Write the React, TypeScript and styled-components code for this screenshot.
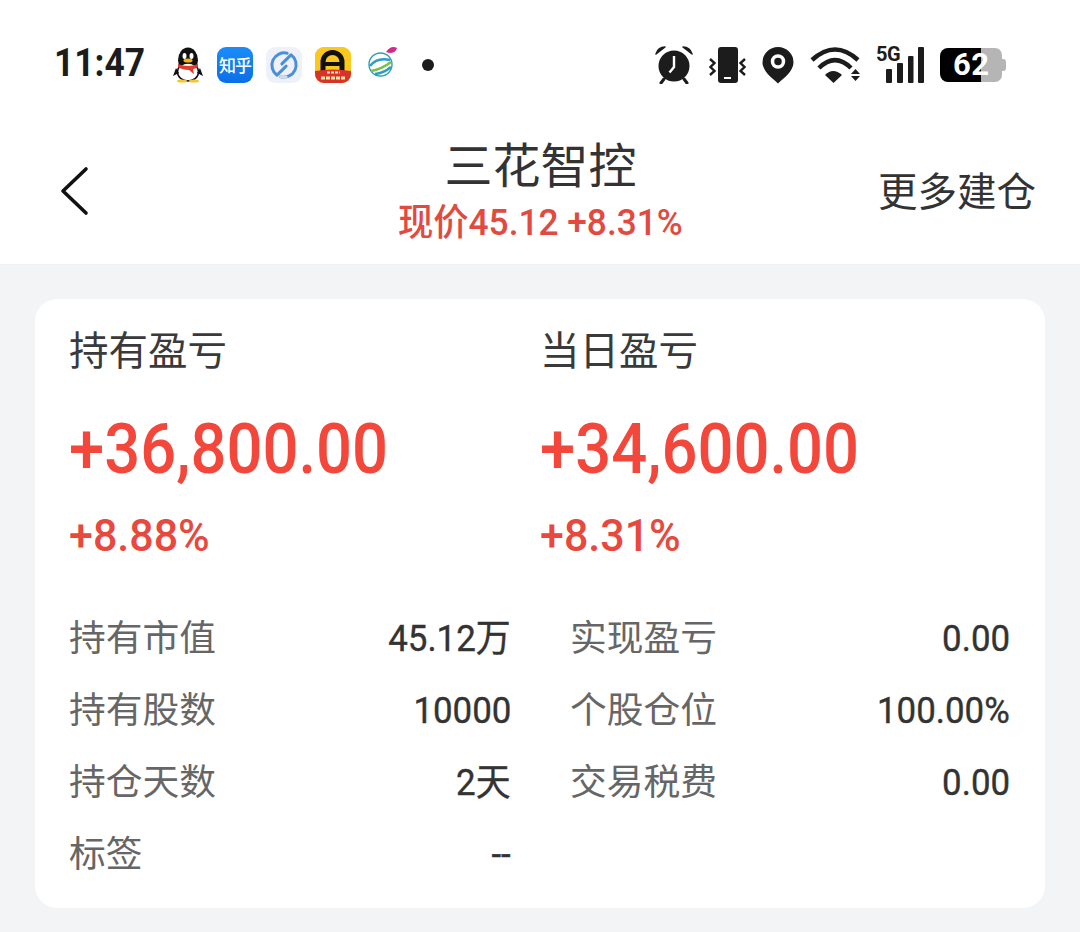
import styled, { createGlobalStyle } from "styled-components";

const GlobalStyle = createGlobalStyle`
  html, body {
    margin: 0;
    padding: 0;
    background: #f3f4f6;
    overflow: hidden;
  }
  * { box-sizing: border-box; }
  body {
    font-family: Roboto, "Noto Sans CJK SC", sans-serif;
  }
`;

const Page = styled.div`
  width: 1080px;
  height: 932px;
  display: flex;
  flex-direction: column;
  background: #f3f4f6;
`;

const Top = styled.header`
  background: #fff;
  height: 265px;
  border-bottom: 1px solid #eff0f2;
  display: flex;
  flex-direction: column;
`;

const StatusBar = styled.div`
  height: 125px;
  padding: 4px 74px 0 54px;
  display: flex;
  align-items: center;
  justify-content: space-between;
`;

const StatusGroup = styled.div<{ $gap: number }>`
  display: flex;
  align-items: center;
  gap: ${(p) => p.$gap}px;
`;

// the phone font is narrower than Roboto, so numbers get squeezed a bit
const Clock = styled.span`
  font-size: 38px;
  font-weight: 700;
  color: #1c1c1c;
  width: 91px;
  margin: -3px 14px 0 0;
  white-space: nowrap;
  transform: scaleX(0.93);
  transform-origin: left center;
`;

const AppIcon = styled.div<{ $bg: string }>`
  width: 36px;
  height: 36px;
  border-radius: 9px;
  background: ${(p) => p.$bg};
  display: flex;
  align-items: center;
  justify-content: center;
  overflow: hidden;
  flex: none;
`;

const ZhihuText = styled.span`
  font-family: "Noto Sans CJK SC", sans-serif;
  font-size: 17px;
  font-weight: 500;
  color: #fff;
  letter-spacing: -1px;
  line-height: 1;
`;

const Dot = styled.span`
  width: 12px;
  height: 12px;
  border-radius: 50%;
  background: #1c1c1c;
  margin-left: 11px;
`;

const SignalWrap = styled.div`
  position: relative;
  width: 48px;
  height: 38px;
`;

const FiveG = styled.span`
  position: absolute;
  left: 0;
  top: -2px;
  font-size: 20px;
  line-height: 20px;
  font-weight: 700;
  color: #1c1c1c;
  white-space: nowrap;
  letter-spacing: -0.5px;
`;

const BatteryWrap = styled.div`
  display: flex;
  align-items: center;
`;

const Battery = styled.div`
  width: 62px;
  height: 34px;
  border-radius: 8px 7px 7px 8px;
  overflow: hidden;
  background: linear-gradient(90deg, #000 0 41px, #b5b5b5 41px);
  display: flex;
  align-items: center;
  padding-left: 13px;
  font-size: 31px;
  font-weight: 700;
  color: #fff;
  letter-spacing: 0.5px;
`;

const BatteryCap = styled.span`
  width: 4px;
  height: 12px;
  background: #b5b5b5;
  border-radius: 0 3px 3px 0;
`;

const NavBar = styled.div`
  flex: 1;
  display: grid;
  grid-template-columns: 1fr 283px 354px;
  align-items: center;
  padding: 0 44px 0 58px;
`;

const Back = styled.div`
  display: flex;
  align-items: center;
  margin-top: -7px;
`;

const TitleBlock = styled.div`
  display: flex;
  flex-direction: column;
  align-items: center;
  margin-top: -14px;
`;

const Title = styled.div`
  font-family: "Noto Sans CJK SC", sans-serif;
  font-size: 48px;
  line-height: 58px;
  color: #333;
`;

const SubTitle = styled.div`
  font-size: 37.5px;
  font-weight: 500;
  line-height: 42px;
  margin-top: 10px;
  color: #e2493f;
  white-space: nowrap;
  transform: scaleX(0.94);
`;

const NavAction = styled.div`
  justify-self: end;
  font-family: "Noto Sans CJK SC", sans-serif;
  font-size: 39.5px;
  color: #333;
  margin-top: -12px;
`;

const Body = styled.main`
  flex: 1;
  padding: 34px 35px 24px;
`;

const Card = styled.section`
  background: #fff;
  border-radius: 22px;
  height: 609px;
  padding: 24px 34px 0;
`;

const Summary = styled.div`
  display: grid;
  grid-template-columns: 471px 1fr;
`;

const SummaryCol = styled.div`
  display: flex;
  flex-direction: column;
`;

const SummaryLabel = styled.div`
  font-family: "Noto Sans CJK SC", sans-serif;
  font-size: 39.5px;
  line-height: 50px;
  color: #3a3a3a;
`;

const BigNumber = styled.div`
  font-size: 70px;
  font-weight: 500;
  line-height: 78px;
  margin-top: 37px;
  color: #f4473b;
  white-space: nowrap;
  transform: scaleX(0.905);
  transform-origin: 1px center;
`;

const Percent = styled.div`
  font-size: 45px;
  font-weight: 500;
  line-height: 48px;
  margin-top: 24px;
  color: #e8483d;
  white-space: nowrap;
  transform: scaleX(0.955);
  transform-origin: 1px center;
`;

const Details = styled.div`
  display: grid;
  grid-template-columns: 442px 440px;
  column-gap: 59px;
  grid-auto-rows: 72px;
  margin-top: 39px;
`;

const DetailRow = styled.div`
  display: flex;
  align-items: baseline;
  justify-content: space-between;
`;

const DetailLabel = styled.span`
  font-family: "Noto Sans CJK SC", sans-serif;
  font-size: 36.75px;
  line-height: 72px;
  color: #666;
`;

const DetailValue = styled.span`
  font-size: 37.5px;
  font-weight: 400;
  color: #333;
  -webkit-text-stroke: 0.4px #333;
  white-space: nowrap;
  transform: scaleX(0.93);
  transform-origin: right center;
`;

const BackIcon = () => (
  <svg width="32" height="52" viewBox="0 0 32 52" fill="none">
    <path d="M28 4 L5 26 L28 48" stroke="#111" strokeWidth="3.6" strokeLinecap="round" strokeLinejoin="round" />
  </svg>
);

const QQIcon = () => (
  <svg width="32" height="36" viewBox="0 0 32 36">
    <ellipse cx="16" cy="13" rx="10" ry="12.5" fill="#111" />
    <ellipse cx="16" cy="25" rx="10.5" ry="9" fill="#fff" stroke="#111" strokeWidth="1.5" />
    <path d="M4 21 L1 29 L7 26 Z M28 21 L31 29 L25 26 Z" fill="#111" />
    <ellipse cx="12.5" cy="9" rx="2" ry="3" fill="#fff" />
    <ellipse cx="19.5" cy="9" rx="2" ry="3" fill="#fff" />
    <ellipse cx="16" cy="13.5" rx="4.5" ry="2" fill="#f7b500" />
    <path d="M6 17 Q16 21 26 17 L26 20 Q22 22 21 22 L22 27 L17 23 Q10 23 6 20 Z" fill="#e23c2b" />
    <ellipse cx="10" cy="34" rx="5" ry="1.5" fill="#f7c531" />
    <ellipse cx="22" cy="34" rx="5" ry="1.5" fill="#f7c531" />
  </svg>
);

const SwirlIcon = () => (
  <svg width="30" height="30" viewBox="0 0 28 28" fill="none" strokeWidth="2.8" strokeLinecap="round" strokeLinejoin="round">
    <path d="M17 3 A11.5 11.5 0 0 0 7.5 23.5 L16 15" stroke="#4a8fdc" />
    <path d="M11 25 A11.5 11.5 0 0 0 20.5 4.5 L12 13" stroke="#4a8fdc" />
    <path d="M11 25 A11.5 11.5 0 0 0 16 25.2" stroke="#d4dbe4" />
  </svg>
);

const BadgeIcon = () => (
  <svg width="36" height="36" viewBox="0 0 36 36">
    <rect width="36" height="36" fill="#fbc81e" />
    <path d="M8 24 V15 A9.5 9.5 0 0 1 27 15 V24" fill="none" stroke="#111" strokeWidth="5" />
    <path d="M8 17 H27" stroke="#111" strokeWidth="4" />
    <path d="M0 24 Q18 21 36 24 V36 H0 Z" fill="#d8322a" />
    <path d="M12 25.5 H25" stroke="#fde7a8" strokeWidth="2" strokeDasharray="3 1" />
    <path d="M6 31 H30" stroke="#fde7a8" strokeWidth="3" strokeDasharray="4 1" />
  </svg>
);

const MobileIcon = () => (
  <svg width="34" height="36" viewBox="0 0 34 36" fill="none">
    <circle cx="16.5" cy="17.5" r="11.5" fill="#fff" stroke="#2f9fb0" strokeWidth="1.4" />
    <path d="M6 19 Q13 10 26 13" stroke="#2e9cc5" strokeWidth="2.5" />
    <path d="M7 24 Q18 22 27 15" stroke="#7ac143" strokeWidth="2.5" />
    <path d="M11 27 Q20 26 27 20" stroke="#2e9cc5" strokeWidth="2.5" />
    <path d="M22 5 Q27 -2 33 1 Q31 8 22 5 Z" fill="#d5288f" />
  </svg>
);

const AlarmIcon = () => (
  <svg width="38" height="38" viewBox="0 0 38 38">
    <circle cx="19" cy="20" r="15.5" fill="#1c1c1c" />
    <path d="M1 8 Q3 1 10 1 Z M37 8 Q35 1 28 1 Z" fill="#1c1c1c" stroke="#1c1c1c" strokeWidth="1.5" strokeLinejoin="round" />
    <path d="M9 33 L6 37 M29 33 L32 37" stroke="#1c1c1c" strokeWidth="3" strokeLinecap="round" />
    <path d="M19 10 V21 L14.5 26.5" stroke="#fff" strokeWidth="2.4" fill="none" />
  </svg>
);

const VibrateIcon = () => (
  <svg width="37" height="38" viewBox="0 0 37 38" fill="none">
    <rect x="9" y="1" width="20" height="36" rx="3" fill="#1c1c1c" />
    <path d="M15 32 H22" stroke="#fff" strokeWidth="2" />
    <path d="M1 13 L5.5 17 L1.5 21 L5.5 25 L1 29" stroke="#1c1c1c" strokeWidth="2.4" />
    <path d="M36 13 L31.5 17 L35.5 21 L31.5 25 L36 29" stroke="#1c1c1c" strokeWidth="2.4" />
  </svg>
);

const PinIcon = () => (
  <svg width="32" height="38" viewBox="0 0 32 38">
    <path d="M16 1 A15.5 15.5 0 0 1 31.5 16.5 C31.5 25 22 32 16 37.5 C10 32 0.5 25 0.5 16.5 A15.5 15.5 0 0 1 16 1 Z" fill="#1c1c1c" />
    <circle cx="16" cy="15.5" r="5.5" fill="none" stroke="#fff" strokeWidth="3.5" />
  </svg>
);

const WifiIcon = () => (
  <svg width="50" height="36" viewBox="0 0 50 36" fill="none">
    <path d="M2 13 Q25 -8 48 13" stroke="#1c1c1c" strokeWidth="4.5" />
    <path d="M9 21 Q25 5 41 21" stroke="#1c1c1c" strokeWidth="4.5" />
    <path d="M15 28 Q23 20 32 28 L23.5 36 Z" fill="#1c1c1c" />
    <path d="M41 27 H50 L45.5 22 Z M41 29 H50 L45.5 34 Z" fill="#1c1c1c" />
  </svg>
);

const SignalBars = () => (
  <svg width="48" height="38" viewBox="0 0 48 38">
    <rect x="10" y="23" width="6" height="14" rx="1" fill="#1c1c1c" />
    <rect x="21" y="17" width="6" height="20" rx="1" fill="#1c1c1c" />
    <rect x="32" y="10" width="5.5" height="27" rx="1" fill="#1c1c1c" />
    <rect x="42" y="1" width="6" height="36" rx="1" fill="#1c1c1c" />
  </svg>
);

const details = [
  ["持有市值", "45.12万", "实现盈亏", "0.00"],
  ["持有股数", "10000", "个股仓位", "100.00%"],
  ["持仓天数", "2天", "交易税费", "0.00"],
  ["标签", "--"],
];

export default function App() {
  return (
    <Page>
      <GlobalStyle />
      <Top>
        <StatusBar>
          <StatusGroup $gap={13}>
            <Clock>11:47</Clock>
            <QQIcon />
            <AppIcon $bg="linear-gradient(180deg,#1b8cfa,#0a6fe8)">
              <ZhihuText>知乎</ZhihuText>
            </AppIcon>
            <AppIcon $bg="#eef2f8">
              <SwirlIcon />
            </AppIcon>
            <AppIcon $bg="#fbc81e">
              <BadgeIcon />
            </AppIcon>
            <MobileIcon />
            <Dot />
          </StatusGroup>
          <StatusGroup $gap={16}>
            <AlarmIcon />
            <VibrateIcon />
            <PinIcon />
            <WifiIcon />
            <SignalWrap>
              <FiveG>5G</FiveG>
              <SignalBars />
            </SignalWrap>
            <BatteryWrap>
              <Battery>62</Battery>
              <BatteryCap />
            </BatteryWrap>
          </StatusGroup>
        </StatusBar>
        <NavBar>
          <Back>
            <BackIcon />
          </Back>
          <TitleBlock>
            <Title>三花智控</Title>
            <SubTitle>现价45.12 +8.31%</SubTitle>
          </TitleBlock>
          <NavAction>更多建仓</NavAction>
        </NavBar>
      </Top>
      <Body>
        <Card>
          <Summary>
            <SummaryCol>
              <SummaryLabel>持有盈亏</SummaryLabel>
              <BigNumber>+36,800.00</BigNumber>
              <Percent>+8.88%</Percent>
            </SummaryCol>
            <SummaryCol>
              <SummaryLabel>当日盈亏</SummaryLabel>
              <BigNumber>+34,600.00</BigNumber>
              <Percent>+8.31%</Percent>
            </SummaryCol>
          </Summary>
          <Details>
            {details.flatMap((row) => {
              const cells = [
                <DetailRow key={row[0]}>
                  <DetailLabel>{row[0]}</DetailLabel>
                  <DetailValue>{row[1]}</DetailValue>
                </DetailRow>,
              ];
              if (row[2]) {
                cells.push(
                  <DetailRow key={row[2]}>
                    <DetailLabel>{row[2]}</DetailLabel>
                    <DetailValue>{row[3]}</DetailValue>
                  </DetailRow>
                );
              }
              return cells;
            })}
          </Details>
        </Card>
      </Body>
    </Page>
  );
}
